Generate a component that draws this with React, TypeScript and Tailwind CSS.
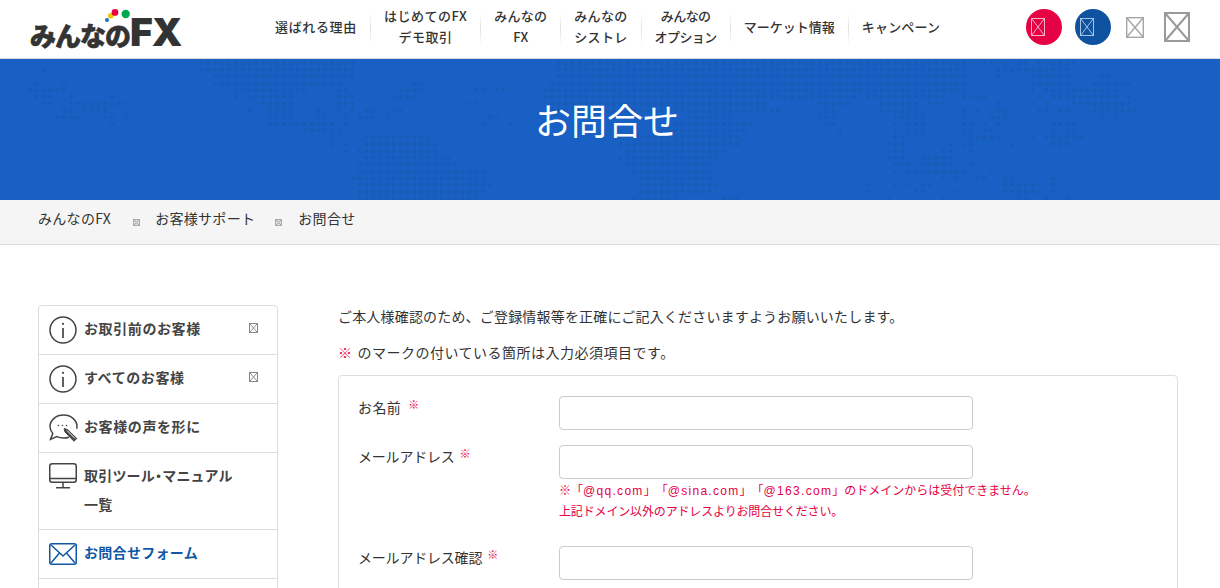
import React from "react";

const JP = "font-['Noto_Sans_CJK_JP','Liberation_Sans',sans-serif]";

// column ranges of the dots of the world map, one line per row
const MAP: number[][] = [
  [5,5,25,47,77,137,139,140,142,142,144,145,147,147,149,152],
  [2,2,25,47,77,136,141,151],
  [27,47,77,136,141,141,146,151,156,157],
  [1,1,5,5,27,45,56,57,76,136,146,151,155,160],
  [0,5,30,40,45,46,54,57,65,66,68,69,75,136,146,146,148,158],
  [1,3,6,6,12,12,30,30,32,38,45,47,53,56,75,120,122,133,136,139,147,147,149,158,160,160],
  [2,3,6,14,34,38,45,47,64,65,76,107,115,119,124,129,131,132,141,141,148,148,152,160],
  [5,6,8,11,32,32,35,38,42,42,45,45,47,47,49,50,53,54,76,109,116,117,124,129,136,136,138,138,141,142,147,148,150,151,155,161],
  [4,7,11,12,14,14,35,38,42,43,46,46,48,50,52,52,67,68,96,102,115,117,126,130,136,136,140,142,156,156,158,158],
  [12,12,35,44,46,46,66,66,70,70,93,105,116,117,126,126,128,130,136,137,139,139,141,141,149,152],
  [40,45,92,104,118,118,126,126,128,130,136,137,139,140,149,149,151,152],
  [44,44,49,58,86,103,126,127,137,141,146,146,148,153],
  [44,44,46,46,49,59,86,103,125,127,134,134,136,137,143,143,149,151],
  [46,46,48,59,87,101,126,127,133,134,137,137],
  [49,61,86,100,125,127,130,134],
  [48,62,87,99,126,128,130,134,137,137],
  [48,66,88,99,126,126,128,136,140,140],
  [47,66,89,99,133,133,135,135,138,139,142,143,149,149],
  [48,67,89,100,122,122,126,126,128,128,130,131,142,146,149,149],
  [48,66,89,99,104,104,122,122,129,130,135,135,142,147,149,149],
  [48,65,88,94,101,103,125,125,133,133,144,145,148,148,151,151],
];

function WorldMap() {
  const dots: React.ReactElement[] = [];
  MAP.forEach((row, r) => {
    for (let i = 0; i < row.length; i += 2) {
      for (let c = row[i]; c <= row[i + 1]; c++) {
        dots.push(<circle key={`${r}-${c}`} cx={29.7 + 6.87 * c} cy={4 + 6.77 * r} r={1.9} />);
      }
    }
  });
  return (
    <svg className="absolute inset-0 w-full h-full" viewBox="0 0 1220 141" fill="#1a5bb5">
      {dots}
    </svg>
  );
}

function Broken({ w, h, color, sw = 1, className = "" }: { w: number; h: number; color: string; sw?: number; className?: string }) {
  return (
    <svg width={w} height={h} viewBox={`0 0 ${w} ${h}`} className={`shrink-0 ${className}`} fill="none" stroke={color} strokeWidth={sw}>
      <rect x={sw / 2} y={sw / 2} width={w - sw} height={h - sw} />
      <path d={`M${sw / 2} ${sw / 2}L${w - sw / 2} ${h - sw / 2}M${w - sw / 2} ${sw / 2}L${sw / 2} ${h - sw / 2}`} />
    </svg>
  );
}

function Logo() {
  return (
    <div className="relative w-[232px] h-[58px] shrink-0">
      <div className="absolute left-0 top-[14px] flex items-baseline leading-[36px] text-[#333] whitespace-nowrap">
        <span className={`${JP} font-black text-[26px] tracking-[-1px] [-webkit-text-stroke:0.6px_#333]`}>みんなの</span>
        <span className="font-['Inter',sans-serif] font-black text-[39px] tracking-[-1px] leading-[36px]">FX</span>
      </div>
      <svg className="absolute left-[70px] top-[6px]" width={40} height={20} viewBox="0 0 40 20">
        <circle cx={7} cy={14} r={2} fill="#1b6fc4" />
        <circle cx={10.8} cy={9.8} r={2.8} fill="#f5c400" />
        <circle cx={15} cy={6.4} r={3.4} fill="#e60044" />
        <circle cx={25.7} cy={8} r={4.2} fill="#00a84f" />
      </svg>
    </div>
  );
}

const NAV: { a: string; b?: string; t: string }[] = [
  { a: "選ばれる理由", t: "tracking-[0.65px]" },
  { a: "はじめてのFX", b: "デモ取引", t: "tracking-[0.52px]" },
  { a: "みんなの", b: "FX", t: "tracking-[0.25px]" },
  { a: "みんなの", b: "シストレ", t: "tracking-[0.3px]" },
  { a: "みんなの", b: "オプション", t: "tracking-[-0.55px]" },
  { a: "マーケット情報", t: "tracking-[0px]" },
  { a: "キャンペーン", t: "tracking-[0.17px]" },
];

function Header() {
  return (
    <header className="h-[59px] border-b border-[#dcdcdc] bg-white flex pl-[30px]">
      <Logo />
      <nav className="flex items-center h-[58px]">
        {NAV.map(({ a, b, t }, i) => (
          <React.Fragment key={i}>
            {i > 0 && <div className="w-px h-[34px] bg-gradient-to-b from-white via-[#e2e2e2] to-white" />}
            <div className={`px-[13px] -mt-[6px] text-center text-[13px] font-medium leading-[21px] text-[#333] whitespace-nowrap ${t} ${JP}`}>
              {a}
              {b && <br />}
              {b}
            </div>
          </React.Fragment>
        ))}
      </nav>
      <div className="flex items-center h-[54px] ml-[73px]">
        <div className="w-9 h-9 rounded-full bg-[#e60044] flex items-center pl-[5px]">
          <Broken w={14} h={18} color="#f6b3c8" />
        </div>
        <div className="w-9 h-9 rounded-full bg-[#0f53a0] flex items-center pl-[5px] ml-[13px]">
          <Broken w={14} h={18} color="#a9c4e2" />
        </div>
        <Broken w={18} h={21} color="#a5a5a5" sw={1.4} className="ml-[15px]" />
        <Broken w={26} h={30} color="#9a9a9a" sw={2} className="ml-[20px]" />
      </div>
    </header>
  );
}

function Hero() {
  return (
    <section className="relative h-[141px] bg-[#1860c4] flex items-center justify-center pb-[22px] pr-[6px]">
      <WorldMap />
      <h1 className={`relative text-[36px] font-normal text-white leading-none ${JP}`}>お問合せ</h1>
    </section>
  );
}

function Crumb() {
  return (
    <div className={`h-[45px] bg-[#f5f5f5] border-b border-[#dddddd] flex items-start pt-[8px] pl-[38px] text-[14px] leading-[20px] tracking-[0.3px] text-[#333] ${JP}`}>
      <span>みんなのFX</span>
      <span className="ml-[22px] mt-[11px] mr-[15px] bg-[#dddddd] flex"><Broken w={7} h={7} color="#aaaaaa" /></span>
      <span>お客様サポート</span>
      <span className="ml-[20px] mt-[11px] mr-[16px] bg-[#dddddd] flex"><Broken w={7} h={7} color="#aaaaaa" /></span>
      <span>お問合せ</span>
    </div>
  );
}

function InfoIcon() {
  return (
    <svg width={28} height={28} viewBox="0 0 28 28" fill="none" stroke="#444" strokeWidth={1.5} className="shrink-0">
      <circle cx={14} cy={14} r={13} />
      <path d="M14 12v10" strokeWidth={1.7} />
      <circle cx={14} cy={7.8} r={1.1} fill="#444" stroke="none" />
    </svg>
  );
}

function VoiceIcon() {
  return (
    <svg width={30} height={28} viewBox="0 0 30 28" fill="none" stroke="#444" strokeWidth={1.5} className="shrink-0">
      <path d="M20 23.2c-1.8.6-3.8.8-5.5.8-2.6 0-4.7-.5-6.7-1.4L1.5 25.4l2.3-6C2 17.500 1 15 1 12.500 1 6 7 1 14.500 1S28 6 28 12.500c0 .8-.1 1.500-.3 2.200" />
      <circle cx={9.500} cy={11.500} r={0.8} fill="#444" stroke="none" />
      <circle cx={13.500} cy={11.500} r={0.8} fill="#444" stroke="none" />
      <circle cx={17.500} cy={11.500} r={0.8} fill="#444" stroke="none" />
      <path d="M18.500 15.500l9.300 9-2.800 2.800-9-9.300-.9-3.400z" fill="#444" stroke="#444" strokeWidth={1} strokeLinejoin="round" />
      <path d="M18 16.500l8 8" stroke="#fff" strokeWidth={1} />
    </svg>
  );
}

function MonitorIcon() {
  return (
    <svg width={28} height={26} viewBox="0 0 28 26" fill="none" stroke="#444" strokeWidth={1.5} className="shrink-0">
      <rect x={0.75} y={0.75} width={26.500} height={18.500} rx={2.500} />
      <path d="M1 15.500h26M14 19.500v5M7 24.750h14" />
    </svg>
  );
}

function MailIcon() {
  return (
    <svg width={28} height={22} viewBox="0 0 28 22" fill="none" stroke="#1257a5" strokeWidth={1.5} className="shrink-0">
      <rect x={0.75} y={0.75} width={26.500} height={20.500} rx={2} />
      <path d="M2 2l12 11L26 2M2 20l8.500-10M26 20l-8.500-10" />
    </svg>
  );
}

function Row({ children, icon, blue, more }: { children: React.ReactNode; icon: React.ReactNode; blue?: boolean; more?: boolean }) {
  return (
    <div className={`relative border-b border-[#dddddd] flex pl-[10px] py-[10px] gap-[6px] items-start text-[14px] leading-[28px] font-semibold ${blue ? "text-[#1257a5] tracking-[0.3px]" : "text-[#444] tracking-[0.6px]"}`}>
      <div className="w-[29px] h-[28px] flex items-center">{icon}</div>
      <div className="-mt-[2px]">{children}</div>
      {more && <Broken w={9} h={10} color="#888888" className="absolute right-[19px] top-[17px]" />}
    </div>
  );
}

function Sidebar() {
  return (
    <aside className={`w-[240px] shrink-0 border border-[#dddddd] rounded-[4px] h-[400px] ${JP}`}>
      <Row icon={<InfoIcon />} more>お取引前のお客様</Row>
      <Row icon={<InfoIcon />} more>すべてのお客様</Row>
      <Row icon={<VoiceIcon />}>お客様の声を形に</Row>
      <div className="border-b border-[#dddddd] flex pl-[10px] py-[10px] gap-[6px] items-start text-[14px] leading-[29px] tracking-[0.2px] font-semibold text-[#444]">
        <div className="w-[29px] h-[26px] flex items-center">
          <MonitorIcon />
        </div>
        <div className="-mt-[2px] w-[170px]">
          取引ツール<span className="[font-feature-settings:'palt']">・</span>マニュアル
          <br />
          一覧
        </div>
      </div>
      <Row icon={<MailIcon />} blue>お問合せフォーム</Row>
    </aside>
  );
}

function Field({ label, lt = "", mark = "ml-[5px]", className = "", children }: { label: string; lt?: string; mark?: string; className?: string; children?: React.ReactNode }) {
  return (
    <div className={`flex ${className}`}>
      <div className={`w-[201px] -ml-px shrink-0 text-[14px] leading-[24px] text-[#333] -mt-px ${lt}`}>
        {label}
        <span className={`text-[#e60044] text-[11px] font-medium relative -top-[4px] ${mark}`}>※</span>
      </div>
      <div className="w-[414px]">
        <div className="h-[34px] border border-[#cccccc] rounded-[4px] bg-white" />
        {children}
      </div>
    </div>
  );
}

function Main() {
  return (
    <main className={`flex-1 min-w-0 ${JP}`}>
      <p className="text-[14px] leading-[24px] text-[#333] -mt-[1px] tracking-[0.18px]">ご本人様確認のため、ご登録情報等を正確にご記入くださいますようお願いいたします。</p>
      <p className="text-[14px] leading-[24px] text-[#333] mt-[12px] tracking-[0.5px]">
        <span className="text-[#e60044] mr-[5px] font-bold">※</span>のマークの付いている箇所は入力必須項目です。
      </p>
      <div className="mt-[11px] border border-[#dddddd] rounded-[4px] pl-[20px] pt-[20px] pb-[40px]">
        <Field label="お名前" lt="tracking-[0.4px]" mark="ml-[7px]" />
        <Field label="メールアドレス" lt="tracking-[-0.2px]" className="mt-[15px]">
          <div className="text-[12px] leading-[20px] text-[#e60044] mt-px whitespace-nowrap">
            ※「<span className="font-['Liberation_Sans',sans-serif] tracking-[1.3px]">@qq.com</span>」「<span className="font-['Liberation_Sans',sans-serif] tracking-[1.3px]">@sina.com</span>」「<span className="font-['Liberation_Sans',sans-serif] tracking-[1.3px]">@163.com</span>」のドメインからは受付できません。
            <br />
            <span className="tracking-[-0.15px]">上記ドメイン以外のアドレスよりお問合せください。</span>
          </div>
        </Field>
        <Field label="メールアドレス確認" lt="tracking-[-0.2px]" className="mt-[25px]" />
      </div>
    </main>
  );
}

export default function App() {
  return (
    <div className="h-[588px] overflow-hidden bg-white [text-spacing-trim:space-all]">
      <Header />
      <Hero />
      <Crumb />
      <div className="flex pl-[38px] pr-[42px] pt-[60px] gap-[60px]">
        <Sidebar />
        <Main />
      </div>
    </div>
  );
}
